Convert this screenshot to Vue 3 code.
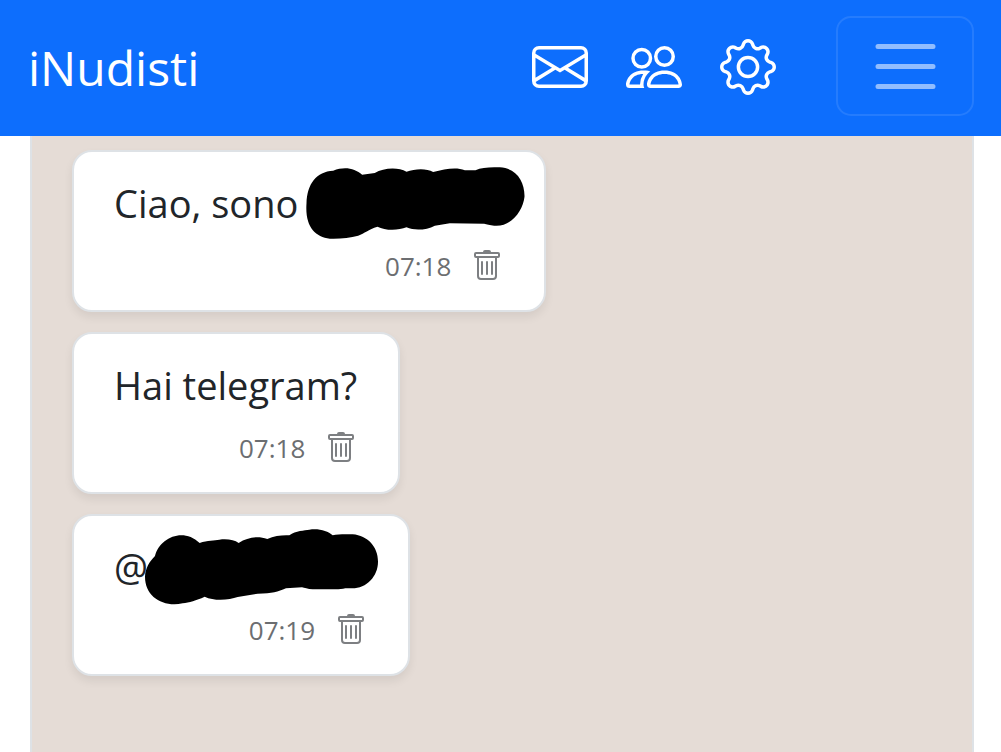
<script setup>
const messages = [
  { id: 1, text: 'Ciao, sono', time: '07:18', mask: 'name' },
  { id: 2, text: 'Hai telegram?', time: '07:18', mask: '' },
  { id: 3, text: '@', time: '07:19', mask: 'handle' },
]
</script>

<template>
  <div class="page">
    <header class="navbar">
      <a class="brand" href="#">iNudisti</a>
      <nav class="actions">
        <a href="#" aria-label="Messaggi">
          <svg class="icon" viewBox="0 0 16 16" aria-hidden="true"><path d="M0 4a2 2 0 0 1 2-2h12a2 2 0 0 1 2 2v8a2 2 0 0 1-2 2H2a2 2 0 0 1-2-2zm2-1a1 1 0 0 0-1 1v.217l7 4.2 7-4.2V4a1 1 0 0 0-1-1zm13 2.383-4.708 2.825L15 11.105zm-.034 6.876-5.64-3.471L8 9.583l-1.326-.795-5.64 3.47A1 1 0 0 0 2 13h12a1 1 0 0 0 .966-.741M1 11.105l4.708-2.897L1 5.383z" /></svg>
        </a>
        <a href="#" aria-label="Amici">
          <svg class="icon" viewBox="0 0 16 16" aria-hidden="true"><path d="M15 14s1 0 1-1-1-4-5-4-5 3-5 4 1 1 1 1zm-7.978-1L7 12.996c.001-.264.167-1.03.76-1.72C8.312 10.629 9.282 10 11 10c1.717 0 2.687.63 3.24 1.276.593.69.758 1.457.76 1.72l-.008.002-.014.002zM11 7a2 2 0 1 0 0-4 2 2 0 0 0 0 4m3-2a3 3 0 1 1-6 0 3 3 0 0 1 6 0M6.936 9.28a6 6 0 0 0-1.23-.247A7 7 0 0 0 5 9c-4 0-5 3-5 4q0 1 1 1h4.216A2.24 2.24 0 0 1 5 13c0-1.01.377-2.042 1.09-2.904.243-.294.526-.569.846-.816M4.92 10A5.5 5.5 0 0 0 4 13H1c0-.26.164-1.03.76-1.724.545-.636 1.492-1.256 3.16-1.275ZM1.5 5.5a3 3 0 1 1 6 0 3 3 0 0 1-6 0m3-2a2 2 0 1 0 0 4 2 2 0 0 0 0-4" /></svg>
        </a>
        <a href="#" aria-label="Impostazioni">
          <svg class="icon" viewBox="0 0 16 16" aria-hidden="true"><path d="M8 4.754a3.246 3.246 0 1 0 0 6.492 3.246 3.246 0 0 0 0-6.492M5.754 8a2.246 2.246 0 1 1 4.492 0 2.246 2.246 0 0 1-4.492 0" /><path d="M9.796 1.343c-.527-1.79-3.065-1.79-3.592 0l-.094.319a.873.873 0 0 1-1.255.52l-.292-.16c-1.64-.892-3.433.902-2.54 2.541l.159.292a.873.873 0 0 1-.52 1.255l-.319.094c-1.79.527-1.79 3.065 0 3.592l.319.094a.873.873 0 0 1 .52 1.255l-.16.292c-.892 1.64.901 3.434 2.541 2.54l.292-.159a.873.873 0 0 1 1.255.52l.094.319c.527 1.79 3.065 1.79 3.592 0l.094-.319a.873.873 0 0 1 1.255-.52l.292.16c1.64.893 3.434-.902 2.54-2.541l-.159-.292a.873.873 0 0 1 .52-1.255l.319-.094c1.79-.527 1.79-3.065 0-3.592l-.319-.094a.873.873 0 0 1-.52-1.255l.16-.292c.893-1.64-.902-3.433-2.541-2.54l-.292.159a.873.873 0 0 1-1.255-.52zm-2.633.283c.246-.835 1.428-.835 1.674 0l.094.319a1.873 1.873 0 0 0 2.693 1.115l.291-.16c.764-.415 1.6.42 1.184 1.185l-.159.292a1.873 1.873 0 0 0 1.116 2.692l.318.094c.835.246.835 1.428 0 1.674l-.319.094a1.873 1.873 0 0 0-1.115 2.693l.16.291c.415.764-.42 1.6-1.185 1.184l-.291-.159a1.873 1.873 0 0 0-2.693 1.116l-.094.318c-.246.835-1.428.835-1.674 0l-.094-.319a1.873 1.873 0 0 0-2.692-1.115l-.292.16c-.764.415-1.6-.42-1.184-1.185l.159-.291A1.873 1.873 0 0 0 1.945 8.93l-.319-.094c-.835-.246-.835-1.428 0-1.674l.319-.094A1.873 1.873 0 0 0 3.06 4.377l-.16-.292c-.415-.764.42-1.6 1.185-1.184l.292.159a1.873 1.873 0 0 0 2.692-1.115z" /></svg>
        </a>
      </nav>
      <button class="toggler" type="button" aria-label="Menu">
        <svg viewBox="0 0 30 30" aria-hidden="true"><path d="M4 7h22M4 15h22M4 23h22" /></svg>
      </button>
    </header>

    <main class="chat">
      <article v-for="m in messages" :key="m.id" class="bubble">
        <div class="body">
          <span>{{ m.text }}</span>
          <svg v-if="m.mask === 'name'" class="mask mask-name" viewBox="49 81 656 216" aria-hidden="true"><path d="M50 190C52 130 80 95 130 92C165 78 195 85 217 104L255 99C280 83 325 80 350 95C375 86 410 84 430 96C465 87 500 80 525 91L557 91C575 82 600 81 630 82C680 85 705 125 704 170C700 210 665 262 613 257C600 256 590 252 583 251L480 250L435 257C410 270 375 273 350 262C325 272 285 272 263 260C235 268 225 280 205 287C180 294 150 297 120 296C75 290 45 260 50 190Z" /></svg>
          <svg v-if="m.mask === 'handle'" class="mask mask-handle" viewBox="257 87 699 228" aria-hidden="true"><path d="M257 230C258 205 270 185 287 168C300 115 370 80 421 129C445 120 465 122 480 119C505 116 525 120 538 129C565 112 595 107 624 117C645 107 670 105 690 106C710 91 735 92 750 89C780 85 805 93 820 106C835 102 860 103 880 103C925 107 956 140 956 185C956 230 920 267 875 265L858 265C845 269 830 268 815 268L760 268C745 268 735 263 728 262L680 265C655 275 640 281 595 281L535 291C510 300 465 304 436 290C410 302 390 307 370 310C310 322 257 290 257 230Z" /></svg>
        </div>
        <footer class="meta">
          <time>{{ m.time }}</time>
          <button class="delete" type="button" aria-label="Elimina messaggio">
            <svg viewBox="0 0 16 16" aria-hidden="true"><path d="M5.5 5.5A.5.5 0 0 1 6 6v6a.5.5 0 0 1-1 0V6a.5.5 0 0 1 .5-.5m2.5 0a.5.5 0 0 1 .5.5v6a.5.5 0 0 1-1 0V6a.5.5 0 0 1 .5-.5m3 .5a.5.5 0 0 0-1 0v6a.5.5 0 0 0 1 0z" /><path d="M14.5 3a1 1 0 0 1-1 1H13v9a2 2 0 0 1-2 2H5a2 2 0 0 1-2-2V4h-.5a1 1 0 0 1-1-1V2a1 1 0 0 1 1-1H6a1 1 0 0 1 1-1h2a1 1 0 0 1 1 1h3.5a1 1 0 0 1 1 1zM4.118 4 4 4.059V13a1 1 0 0 0 1 1h6a1 1 0 0 0 1-1V4.059L11.882 4zM2.5 3h11V2h-11z" /></svg>
          </button>
        </footer>
      </article>
    </main>
  </div>
</template>

<style>
body {
  background: #fff;
}
</style>

<style scoped>
.page {
  display: flex;
  flex-direction: column;
  min-height: 100vh;
  font-family: "Segoe UI", "Open Sans", "Noto Sans", sans-serif;
  color: #212529;
}

.navbar {
  display: flex;
  align-items: center;
  box-sizing: border-box;
  padding: 16px 27px 20px 28px;
  background: #0d6efd;
}

.brand {
  margin-right: auto;
  padding-top: 4px;
  color: #fff;
  font-size: 48px;
  line-height: 72px;
  text-decoration: none;
}

.actions {
  display: flex;
  gap: 38px;
  margin-right: 60px;
  padding-top: 2px;
}

.actions a {
  display: flex;
  color: #fff;
}

.icon {
  width: 56px;
  height: 56px;
  fill: currentColor;
}

.toggler {
  display: flex;
  align-items: center;
  justify-content: center;
  box-sizing: border-box;
  width: 138px;
  height: 100px;
  padding: 0;
  border: 2px solid rgba(255, 255, 255, 0.1);
  border-radius: 15px;
  background: transparent;
}

.toggler svg {
  width: 75px;
  height: 75px;
  fill: none;
  stroke: rgba(255, 255, 255, 0.55);
  stroke-width: 2;
  stroke-linecap: round;
}

.chat {
  display: flex;
  flex: 1;
  flex-direction: column;
  align-items: flex-start;
  gap: 20px;
  margin: 0 27px 0 30px;
  padding: 14px 40px;
  border: solid #dee2e6;
  border-width: 0 2px;
  background: #e5dcd6;
}

.bubble {
  padding: 22px 41px 23px 40px;
  border: 2px solid #dee2e6;
  border-radius: 20px;
  background: #fff;
  box-shadow: 0 5px 10px rgba(0, 0, 0, 0.075);
}

.body {
  display: flex;
  height: 60px;
  font-size: 38px;
  line-height: 58px;
}

.mask {
  flex: none;
}

.mask-name {
  width: 219px;
  height: 72px;
  margin: -7px -22px 0 8px;
}

.mask-handle {
  width: 233px;
  height: 76px;
  margin: -9px -11px 0 -3px;
}

.meta {
  display: flex;
  align-items: center;
  justify-content: flex-end;
  gap: 20px;
  margin-top: 11px;
  color: #6c6e71;
  font-size: 26px;
  line-height: 42px;
}

.delete {
  display: flex;
  padding: 0;
  border: 0;
  background: transparent;
  color: #7d7f82;
}

.delete svg {
  width: 32px;
  height: 32px;
  fill: currentColor;
}
</style>
